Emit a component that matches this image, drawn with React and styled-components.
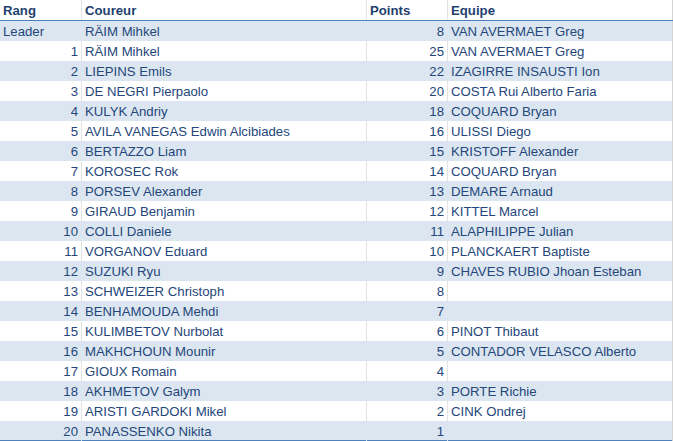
import React from 'react'
import styled, { createGlobalStyle } from 'styled-components'

const Global = createGlobalStyle`
  body {
    margin: 0;
    background: #ffffff;
    font-family: "Liberation Sans", Arial, sans-serif;
  }
`

const Table = styled.div`
  width: 673px;
  color: #24467a;
  font-size: 13.2px;
`

const Row = styled.div`
  display: grid;
  grid-template-columns: 82px 285px 81px 225px;
  height: 20px;
  background: ${p => (p.$shaded ? '#dce6f1' : '#ffffff')};
  &:last-child {
    box-shadow: inset 0 -1px 0 #4f81bd;
  }
`

const HeadRow = styled(Row)`
  height: 21px;
  box-sizing: border-box;
  border-bottom: 1px solid #4f81bd;
  font-weight: bold;
  color: #1f416f;
`

const Cell = styled.div`
  box-sizing: border-box;
  display: flex;
  align-items: center;
  justify-content: ${p => (p.$right ? 'flex-end' : 'flex-start')};
  padding: ${p => (p.$right ? '0 3px 0 2px' : '0 2px 0 3px')};
  border-right: 1px solid ${p => (p.$shaded ? '#dce6f1' : '#e3e3e3')};
  white-space: nowrap;
  overflow: hidden;
  &:last-child {
    border-right-color: #d4d4d4;
  }
`

const rows = [
  ['Leader', 'RÄIM Mihkel', '8', 'VAN AVERMAET Greg'],
  ['1', 'RÄIM Mihkel', '25', 'VAN AVERMAET Greg'],
  ['2', 'LIEPINS Emils', '22', 'IZAGIRRE INSAUSTI Ion'],
  ['3', 'DE NEGRI Pierpaolo', '20', 'COSTA Rui Alberto Faria'],
  ['4', 'KULYK Andriy', '18', 'COQUARD Bryan'],
  ['5', 'AVILA VANEGAS Edwin Alcibiades', '16', 'ULISSI Diego'],
  ['6', 'BERTAZZO Liam', '15', 'KRISTOFF Alexander'],
  ['7', 'KOROSEC Rok', '14', 'COQUARD Bryan'],
  ['8', 'PORSEV Alexander', '13', 'DEMARE Arnaud'],
  ['9', 'GIRAUD Benjamin', '12', 'KITTEL Marcel'],
  ['10', 'COLLI Daniele', '11', 'ALAPHILIPPE Julian'],
  ['11', 'VORGANOV Eduard', '10', 'PLANCKAERT Baptiste'],
  ['12', 'SUZUKI Ryu', '9', 'CHAVES RUBIO Jhoan Esteban'],
  ['13', 'SCHWEIZER Christoph', '8', ''],
  ['14', 'BENHAMOUDA Mehdi', '7', ''],
  ['15', 'KULIMBETOV Nurbolat', '6', 'PINOT Thibaut'],
  ['16', 'MAKHCHOUN Mounir', '5', 'CONTADOR VELASCO Alberto'],
  ['17', 'GIOUX Romain', '4', ''],
  ['18', 'AKHMETOV Galym', '3', 'PORTE Richie'],
  ['19', 'ARISTI GARDOKI Mikel', '2', 'CINK Ondrej'],
  ['20', 'PANASSENKO Nikita', '1', ''],
]

export default function App() {
  return (
    <>
      <Global />
      <Table>
        <HeadRow>
          <Cell>Rang</Cell>
          <Cell>Coureur</Cell>
          <Cell>Points</Cell>
          <Cell>Equipe</Cell>
        </HeadRow>
        {rows.map((r, i) => {
          const shaded = i % 2 === 0
          return (
            <Row key={i} $shaded={shaded}>
              <Cell $shaded={shaded} $right={r[0] !== 'Leader'}>{r[0]}</Cell>
              <Cell $shaded={shaded}>{r[1]}</Cell>
              <Cell $shaded={shaded} $right>{r[2]}</Cell>
              <Cell $shaded={shaded}>{r[3]}</Cell>
            </Row>
          )
        })}
      </Table>
    </>
  )
}
